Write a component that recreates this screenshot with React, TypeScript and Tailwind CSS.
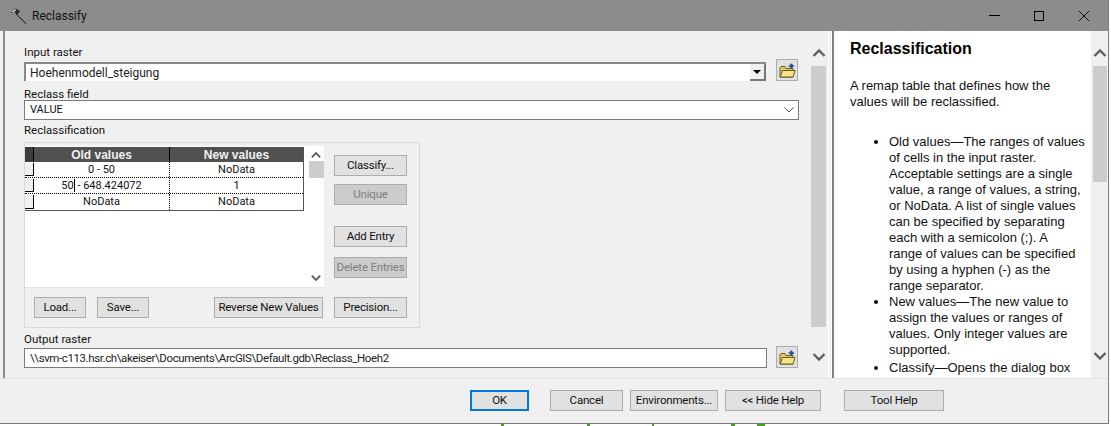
import type { ReactNode } from "react";

const ui = "font-['Roboto','Noto_Sans',sans-serif]";

const HammerIcon = () => (
  <svg width="18" height="18" viewBox="0 0 18 18" className="shrink-0">
    <path d="M6 6 L16.5 16.5" stroke="#3f3f3f" strokeWidth="2" />
    <path d="M7.5 6.5 L17 16" stroke="#c4c4c4" strokeWidth="0.8" />
    <path d="M0.5 6 L5.5 1.5 L10 4 L7 8 L5 5 Z" fill="#262626" />
    <path d="M2.5 5 L6 2.8" stroke="#efefef" strokeWidth="1.1" />
  </svg>
);

const FolderIcon = () => (
  <svg width="17" height="17" viewBox="0 0 17 17">
    <path d="M1 5.5 V15 H14 V6.5 H7 L6 4.5 H2 Z" fill="#e6c65a" stroke="#6b5a1e" strokeWidth="1" />
    <path d="M1.2 15 L3.5 8.5 H16 L14 15 Z" fill="#f7e38e" stroke="#6b5a1e" strokeWidth="1" />
    <path d="M9.5 4 H13 M11.5 1.8 L14 4 L11.5 6.2" fill="none" stroke="#1c4f9c" strokeWidth="1.7" />
  </svg>
);

const Chevron = ({ down, size = 16 }: { down?: boolean; size?: number }) => (
  <svg width={size} height={10} viewBox="0 0 16 10">
    <path d={down ? "M2.5 2 L8 7.5 L13.5 2" : "M2.5 8 L8 2.5 L13.5 8"} fill="none" stroke="#5f5f5f" strokeWidth="2.4" />
  </svg>
);

const Btn = ({
  children,
  className = "",
  disabled,
  focused,
}: {
  children: ReactNode;
  className?: string;
  disabled?: boolean;
  focused?: boolean;
}) => (
  <div
    className={`flex h-[21px] items-center justify-center pt-px whitespace-nowrap text-[11.5px] tracking-[-0.2px] ${
      focused ? "border-2 border-[#0078d7]" : "border border-[#adadad]"
    } ${disabled ? "bg-[#cccccc] text-[#7f7f7f]" : "bg-[#e1e1e1] text-[#111]"} ${className}`}
  >
    {children}
  </div>
);

const FolderBtn = () => (
  <div className="flex h-[22px] w-[22px] items-center justify-center border border-[#adadad] bg-[#e1e1e1]">
    <FolderIcon />
  </div>
);

const Cell = ({ children, className = "" }: { children: ReactNode; className?: string }) => (
  <div className={`flex items-center justify-center pt-px text-[11px] text-[#111] ${className}`}>{children}</div>
);

const rows: [ReactNode, string][] = [
  ["0 - 50", "NoData"],
  [
    <span key="edit">
      50<span className="border-l border-black" /> - 648.424072
    </span>,
    "1",
  ],
  ["NoData", "NoData"],
];

const ReclassTable = () => (
  <div className="flex h-[142px] w-[299px] border-b border-[#e3e3e3] bg-white">
    <div className="w-[283px] pt-[1px]">
      <div className="w-[279px] border-r border-b border-[#555]">
        <div className="flex h-[15px] bg-[#505050] font-['Liberation_Sans',sans-serif] text-[12px] font-bold text-[#f0f0f0]">
          <div className="w-[9px] shrink-0 border-r border-black bg-[#3c3c3c]" />
          <div className="flex w-[136px] items-center justify-center border-r border-black">Old values</div>
          <div className="flex flex-1 items-center justify-center">New values</div>
        </div>
        {rows.map(([oldValue, newValue], i) => (
          <div key={i} className="flex h-[16px] border-b border-dotted border-black last:border-b-0">
            <div className="my-[1px] w-[9px] shrink-0 border-r border-b border-black bg-[#f0f0f0]" />
            <Cell className="w-[136px] border-r border-dotted border-black">{oldValue}</Cell>
            <Cell className="flex-1">{newValue}</Cell>
          </div>
        ))}
      </div>
    </div>
    <div className="flex w-[16px] flex-col items-center bg-white pt-[4px]">
      <Chevron size={12} />
      <div className="mt-[1px] h-[17px] w-[15px] bg-[#cdcdcd]" />
      <div className="mt-auto pb-[4px]">
        <Chevron down size={12} />
      </div>
    </div>
  </div>
);

const LeftPane = () => (
  <div className="flex w-[823px] shrink-0 overflow-hidden bg-[#f0f0f0]">
    <div className="w-[806px] shrink-0 pt-[14px] pl-[19px]">
      <div className="h-[14px] text-[11.5px] leading-[15px] text-[#111]">Input raster</div>
      <div className="flex items-start">
        <div className="mt-[3px] flex h-[19px] w-[742px] items-center justify-between border-t-2 border-l-2 border-[#888] bg-white pl-[4px]">
          <span className="text-[12px] text-[#222]">Hoehenmodell_steigung</span>
          <div className="flex h-[17px] w-[16px] items-center justify-center border-r-2 border-b-2 border-[#777] bg-[#f0f0f0]">
            <div className="h-0 w-0 border-x-[4px] border-t-[4px] border-x-transparent border-t-black" />
          </div>
        </div>
        <div className="ml-[10px]">
          <FolderBtn />
        </div>
      </div>
      <div className="mt-[6px] h-[13px] text-[11.5px] leading-[15px] text-[#111]">Reclass field</div>
      <div className="flex h-[20px] w-[775px] items-center justify-between border border-[#7a7a7a] bg-white pr-[4px] pl-[5px] text-[11px] text-[#111]">
        <span>VALUE</span>
        <svg width="10" height="6" viewBox="0 0 10 6">
          <path d="M0.5 0.5 L5 5 L9.5 0.5" fill="none" stroke="#555" strokeWidth="1" />
        </svg>
      </div>
      <div className="mt-[3px] h-[15px] text-[11.5px] leading-[15px] text-[#111]">Reclassification</div>
      <div className="mt-[4px] flex h-[186px] w-[396px] flex-col border border-[#d9d9d9] pt-[3px]">
        <div className="flex">
          <ReclassTable />
          <div className="ml-[10px] pt-[9px]">
            <Btn className="w-[73px]">Classify...</Btn>
            <Btn disabled className="mt-[8px] w-[73px]">
              Unique
            </Btn>
            <Btn className="mt-[21px] w-[73px]">Add Entry</Btn>
            <Btn disabled className="mt-[10px] w-[73px]">
              Delete Entries
            </Btn>
          </div>
        </div>
        <div className="mt-[9px] flex pl-[9px]">
          <Btn className="w-[52px]">Load...</Btn>
          <Btn className="ml-[11px] w-[52px]">Save...</Btn>
          <Btn className="ml-[65px] w-[109px]">Reverse New Values</Btn>
          <Btn className="ml-[11px] w-[73px]">Precision...</Btn>
        </div>
      </div>
      <div className="mt-[4px] h-[14px] text-[11.5px] leading-[15px] text-[#111]">Output raster</div>
      <div className="flex items-start">
        <div className="mt-[2px] flex h-[20px] w-[743px] items-center border border-[#7a7a7a] bg-white pt-px pl-[5px] text-[11.5px] tracking-[-0.4px] text-[#222]">
          {"\\\\svm-c113.hsr.ch\\akeiser\\Documents\\ArcGIS\\Default.gdb\\Reclass_Hoeh2"}
        </div>
        <div className="ml-[9px]">
          <FolderBtn />
        </div>
      </div>
    </div>
    <div className="flex w-[15px] shrink-0 flex-col items-center pt-[17px]">
      <Chevron />
      <div className="mt-[8px] h-[261px] w-[15px] bg-[#cdcdcd]" />
      <div className="mt-[25px]">
        <Chevron down />
      </div>
    </div>
  </div>
);

const HelpPane = () => (
  <div className="flex min-w-0 flex-1 overflow-hidden border-l-2 border-[#7f7f7f] bg-white">
    <div className="w-[257px] shrink-0 pt-[8px] pl-[16px] font-['Liberation_Sans',sans-serif] text-[13px] leading-[16px] text-[#111]">
      <div className="text-[16px] leading-[20px] font-bold text-black">Reclassification</div>
      <p className="mt-[19px] w-[225px]">A remap table that defines how the values will be reclassified.</p>
      <ul className="mt-[24px] w-[240px] list-disc pl-[39px]">
        <li>
          Old values—The ranges of values of cells in the input raster. Acceptable settings are a single value, a range
          of values, a string, or NoData. A list of single values can be specified by separating each with a semicolon
          (;). A<br />
          range of values can be specified by using a hyphen (-) as the
          <br />
          range separator.
        </li>
        <li>New values—The new value to assign the values or ranges of values. Only integer values are supported.</li>
        <li className="mt-[2px]">Classify—Opens the dialog box allowing the classification.</li>
      </ul>
    </div>
    <div className="flex w-[18px] shrink-0 flex-col items-center bg-[#f0f0f0] pt-[17px]">
      <Chevron />
      <div className="mt-[8px] h-[116px] w-[15px] bg-[#cdcdcd]" />
      <div className="mt-auto pb-[17px]">
        <Chevron down />
      </div>
    </div>
  </div>
);

export default function App() {
  return (
    <div className={`h-[426px] w-[1111px] overflow-hidden bg-white ${ui}`}>
      <div className="h-[424px] w-[1109px] border-r border-b border-[#7a7a7a] bg-[#f0f0f0]">
        <div className="flex h-[31px] items-center bg-[#8c8c8c] pl-[10px] text-[12px] text-[#111]">
          <HammerIcon />
          <span className="ml-[4px]">Reclassify</span>
          <div className="ml-auto flex items-center">
            <div className="h-px w-[11px] bg-black" />
            <div className="ml-[34px] h-[10px] w-[10px] border border-black" />
            <svg width="12" height="12" viewBox="0 0 12 12" className="mr-[18px] ml-[34px]">
              <path d="M1 1 L11 11 M11 1 L1 11" stroke="#111" strokeWidth="1" />
            </svg>
          </div>
        </div>
        <div className="flex h-[348px] border-b border-[#e3e3e3] pr-[1px]">
          <div className="w-[3px] shrink-0 bg-[#f0f0f0]" />
          <div className="w-[2px] shrink-0 bg-[#8a8a8a]" />
          <LeftPane />
          <div className="w-[4px] shrink-0 border-x border-white bg-[#f0f0f0]" />
          <HelpPane />
        </div>
        <div className="flex pt-[11px] pl-[470px]">
          <Btn focused className="w-[59px]">
            OK
          </Btn>
          <Btn className="ml-[21px] w-[73px]">Cancel</Btn>
          <Btn className="ml-[7px] w-[88px]">Environments...</Btn>
          <Btn className="ml-[7px] w-[96px]">&lt;&lt; Hide Help</Btn>
          <Btn className="ml-[23px] w-[100px]">Tool Help</Btn>
        </div>
      </div>
      <svg width="1111" height="2" viewBox="0 0 1111 2" className="block">
        <path d="M501 0h3v2h-3z M587 0h3v2h-3z M652 0h2v2h-2z M731 0h4v2h-4z M757 0h8v2h-8z" fill="#3fa31a" />
      </svg>
    </div>
  );
}
